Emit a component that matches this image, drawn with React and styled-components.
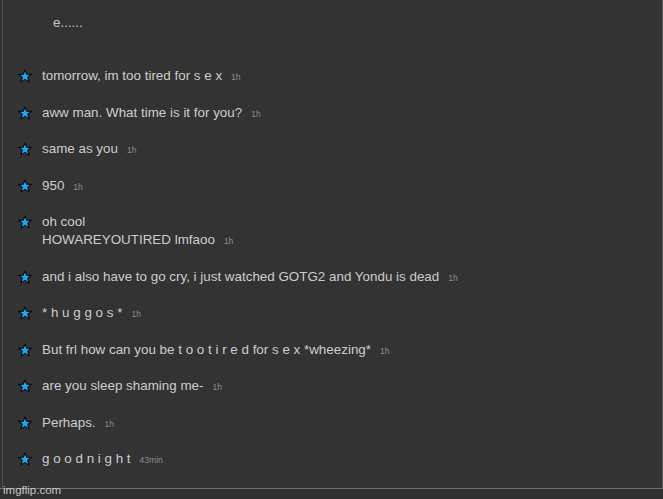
import React from "react";
import styled, { createGlobalStyle } from "styled-components";

const GlobalStyle = createGlobalStyle`
  html, body {
    margin: 0;
    padding: 0;
    background: #333333;
  }
`;

const Frame = styled.div`
  position: relative;
  width: 663px;
  height: 499px;
  box-sizing: border-box;
  display: flex;
  flex-direction: column;
  background: #333333;
  font-family: "Liberation Sans", Arial, sans-serif;
  overflow: hidden;
`;

const Body = styled.div`
  flex: 1;
  margin-left: 2px;
  border-left: 1px solid #4d4d4d;
  border-right: 1px solid #5a5a5a;
  padding: 14px 0 0 15px;
`;

const Header = styled.div`
  padding-left: 35px;
  font-size: 13.4px;
  line-height: 18px;
  color: #c9c9c9;
  margin-bottom: 35px;
`;

const List = styled.div`
  display: flex;
  flex-direction: column;
  gap: 18.5px;
`;

const Row = styled.div`
  display: flex;
  align-items: flex-start;
`;

const StarBox = styled.div`
  width: 24px;
  height: 18px;
  display: flex;
  align-items: center;
  flex-shrink: 0;
`;

const Text = styled.div`
  font-size: 13.4px;
  line-height: 18px;
  color: #cdcdcd;
`;

const Line = styled.div`
  height: 18px;
  white-space: nowrap;
`;

const Time = styled.span`
  font-size: 8.5px;
  line-height: 0;
  color: #8e8e8e;
  margin-left: 9px;
`;

const Footer = styled.div`
  height: 10px;
  border-top: 1px solid #6e6e6e;
  background: #303030;
`;

const Watermark = styled.div`
  position: absolute;
  left: 3px;
  bottom: 2px;
  font-size: 11.5px;
  line-height: 13px;
  color: rgba(235, 235, 235, 0.8);
`;

const Star = () => (
  <svg width="14" height="14" viewBox="0 0 24 24">
    <polygon
      points="12,1.5 15,9 23,9.2 16.8,14.2 19,22.5 12,17.8 5,22.5 7.2,14.2 1,9.2 9,9"
      fill="#1fa9f5"
      stroke="#0c0c0c"
      strokeWidth="2"
      strokeLinejoin="round"
    />
  </svg>
);

const messages = [
  { lines: ["tomorrow, im too tired for s e x"], time: "1h" },
  { lines: ["aww man. What time is it for you?"], time: "1h" },
  { lines: ["same as you"], time: "1h" },
  { lines: ["950"], time: "1h" },
  { lines: ["oh cool", "HOWAREYOUTIRED lmfaoo"], time: "1h" },
  {
    lines: ["and i also have to go cry, i just watched GOTG2 and Yondu is dead"],
    time: "1h",
  },
  { lines: ["* h u g g o s *"], time: "1h" },
  {
    lines: ["But frl how can you be t o o t i r e d for s e x *wheezing*"],
    time: "1h",
  },
  { lines: ["are you sleep shaming me-"], time: "1h" },
  { lines: ["Perhaps."], time: "1h" },
  { lines: ["g o o d n i g h t"], time: "43min" },
];

const App = () => {
  return (
    <>
      <GlobalStyle />
      <Frame>
        <Body>
          <Header>e......</Header>
          <List>
            {messages.map((m, i) => (
              <Row key={i}>
                <StarBox>
                  <Star />
                </StarBox>
                <Text>
                  {m.lines.map((line, j) => (
                    <Line key={j}>
                      {line}
                      {j === m.lines.length - 1 && <Time>{m.time}</Time>}
                    </Line>
                  ))}
                </Text>
              </Row>
            ))}
          </List>
        </Body>
        <Footer />
        <Watermark>imgflip.com</Watermark>
      </Frame>
    </>
  );
};

export default App;
